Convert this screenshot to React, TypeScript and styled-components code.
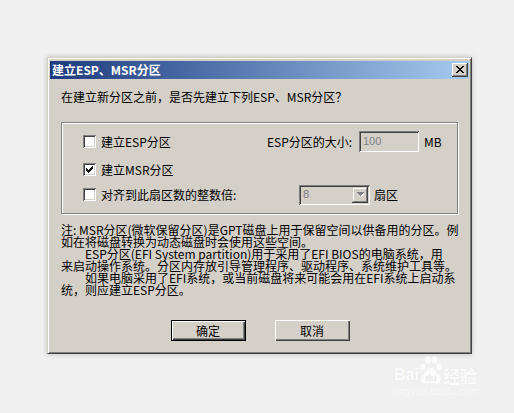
import React from "react";
import styled, { createGlobalStyle } from "styled-components";

const GlobalStyle = createGlobalStyle`
  html, body {
    margin: 0;
    padding: 0;
    background: #f0f0f0;
  }
  body {
    width: 514px;
    height: 413px;
    overflow: hidden;
    font-family: "Noto Sans CJK SC", "Liberation Sans", sans-serif;
  }
`;

const Page = styled.div`
  position: relative;
  width: 514px;
  height: 413px;
  box-sizing: border-box;
  padding: 57px 0 0 47px;
`;

const Window = styled.div`
  width: 425px;
  height: 297px;
  box-sizing: border-box;
  background: #d4d0c8;
  border: 1px solid;
  border-color: #d4d0c8 #404040 #404040 #d4d0c8;
  box-shadow: inset 1px 1px 0 #fff, inset -1px -1px 0 #808080,
    0 0 5px rgba(0, 0, 0, 0.22);
  padding: 3px 2px 2px 2px;
  display: flex;
  flex-direction: column;
`;

const TitleBar = styled.div`
  height: 18px;
  flex-shrink: 0;
  display: flex;
  align-items: center;
  justify-content: space-between;
  padding: 0 1px 0 2px;
  background: linear-gradient(to right, #1c3a7e, #a6caf0);
`;

const TitleText = styled.span`
  color: #fff;
  font-size: 12px;
  font-weight: bold;
  line-height: 18px;
  white-space: nowrap;
`;

const CloseButton = styled.div`
  width: 16px;
  height: 14px;
  box-sizing: border-box;
  background: #d4d0c8;
  box-shadow: inset -1px -1px 0 #404040, inset 1px 1px 0 #fff,
    inset -2px -2px 0 #808080;
  display: flex;
  align-items: center;
  justify-content: center;
  padding: 0 1px 1px 0;
`;

const Body = styled.div`
  flex: 1;
  padding: 12px 10px 0 11px;
  display: flex;
  flex-direction: column;
  font-size: 12px;
  color: #000;
`;

const Prompt = styled.div`
  line-height: 12px;
  white-space: nowrap;
`;

const GroupBox = styled.div`
  margin-top: 19px;
  width: 397px;
  height: 92px;
  box-sizing: border-box;
  border: 1px solid #808080;
  box-shadow: inset 1px 1px 0 #fff, 1px 1px 0 #fff;
  padding: 8px 0 0 21px;
`;

const Row = styled.div<{ $top?: number }>`
  height: 21px;
  margin-top: ${(p) => p.$top ?? 0}px;
  display: flex;
  align-items: center;
`;

const CheckItem = styled.label<{ $width: number }>`
  width: ${(p) => p.$width}px;
  display: flex;
  align-items: center;
  gap: 5px;
  line-height: 12px;
  white-space: nowrap;
`;

const CheckBox = styled.span`
  width: 13px;
  height: 13px;
  box-sizing: border-box;
  background: #fff;
  box-shadow: inset 1px 1px 0 #808080, inset -1px -1px 0 #fff,
    inset 2px 2px 0 #404040, inset -2px -2px 0 #d4d0c8;
  display: flex;
  align-items: center;
  justify-content: center;
`;

const FieldLabel = styled.span`
  width: 92px;
  line-height: 12px;
  white-space: nowrap;
`;

const Sunken = styled.div<{ $width: number; $height: number }>`
  width: ${(p) => p.$width}px;
  height: ${(p) => p.$height}px;
  box-sizing: border-box;
  background: #d4d0c8;
  box-shadow: inset 1px 1px 0 #808080, inset -1px -1px 0 #fff,
    inset 2px 2px 0 #404040, inset -2px -2px 0 #d4d0c8;
  padding: 2px;
  display: flex;
  align-items: center;
  font-family: "Liberation Sans", sans-serif;
  font-size: 11px;
  color: #808080;
`;

const FieldText = styled.span`
  flex: 1;
  padding-left: 2px;
  line-height: 13px;
`;

const DropButton = styled.div`
  width: 16px;
  height: 16px;
  box-sizing: border-box;
  background: #d4d0c8;
  box-shadow: inset -1px -1px 0 #404040, inset 1px 1px 0 #d4d0c8,
    inset -2px -2px 0 #808080, inset 2px 2px 0 #fff;
  display: flex;
  align-items: center;
  justify-content: center;
`;

const Unit = styled.span<{ $gap: number }>`
  margin-left: ${(p) => p.$gap}px;
  line-height: 12px;
  white-space: nowrap;
`;

const Note = styled.div`
  margin-top: 10px;
  line-height: 12px;
`;

const NoteLine = styled.div<{ $indent?: boolean }>`
  white-space: nowrap;
  padding-left: ${(p) => (p.$indent ? 24 : 0)}px;
`;

const Buttons = styled.div`
  margin-top: 24px;
  display: flex;
  justify-content: center;
  gap: 29px;
`;

const PushButton = styled.button<{ $default?: boolean }>`
  width: 75px;
  height: 21px;
  box-sizing: border-box;
  margin: 0;
  padding: 0;
  background: #d4d0c8;
  font-family: "Noto Sans CJK SC", sans-serif;
  font-size: 12px;
  line-height: 12px;
  color: #000;
  border: ${(p) => (p.$default ? "1px solid #000" : "none")};
  box-shadow: inset 1px 1px 0 #fff, inset -1px -1px 0 #404040,
    inset -2px -2px 0 #808080;
`;

const Watermark = styled.div`
  position: absolute;
  left: 394px;
  top: 356px;
  display: flex;
  flex-direction: column;
  color: #fbfbfb;
  text-shadow: 0 0 1px rgba(0, 0, 0, 0.06);
  font-family: "Liberation Sans", sans-serif;
`;

const MarkTop = styled.div`
  display: flex;
  align-items: flex-end;
  height: 28px;
`;

const MarkBai = styled.span`
  font-size: 16px;
  font-weight: bold;
  line-height: 16px;
  padding-bottom: 1px;
`;

const MarkJy = styled.span`
  font-family: "Noto Sans CJK SC", sans-serif;
  font-size: 17px;
  font-weight: bold;
  line-height: 17px;
`;

const MarkUrl = styled.span`
  margin-top: 3px;
  font-size: 10px;
  line-height: 10px;
  letter-spacing: 0.2px;
`;

const CheckMark = () => (
  <svg width="7" height="7" viewBox="0 0 7 7" shapeRendering="crispEdges">
    <path
      d="M0 2h1v1h1v1h1V3h1V2h1V1h1V0h1v3H6v1H5v1H4v1H3v1H2V6H1V5H0z"
      fill="#000"
    />
  </svg>
);

const CloseX = () => (
  <svg width="8" height="7" viewBox="0 0 8 7" shapeRendering="crispEdges">
    <path
      d="M0 0h2v1h1v1h2V1h1V0h2v1H7v1H6v1H5v1h1v1h1v1h1v1H6V6H5V5H3v1H2v1H0V6h1V5h1V4h1V3H2V2H1V1H0z"
      fill="#000"
    />
  </svg>
);

const DownArrow = () => (
  <svg width="7" height="5" viewBox="0 0 7 5" shapeRendering="crispEdges">
    <path d="M1 1h7v1H7v1H6v1H5v1H4V4H3V3H2V2H1z" fill="#fff" />
    <path d="M0 0h7v1H6v1H5v1H4v1H3V3H2V2H1V1H0z" fill="#808080" />
  </svg>
);

const Paw = () => (
  <svg width="24" height="28" viewBox="0 0 24 28">
    <ellipse cx="4" cy="11" rx="2.6" ry="3.2" fill="#fbfbfb" />
    <ellipse cx="9" cy="4" rx="2.8" ry="3.4" fill="#fbfbfb" />
    <ellipse cx="15.5" cy="4" rx="2.8" ry="3.4" fill="#fbfbfb" />
    <ellipse cx="20.5" cy="11" rx="2.6" ry="3.2" fill="#fbfbfb" />
    <path
      d="M12 12c3 0 4 3 6 5s4 3 4 6-2 5-5 4.5c-2-.3-3-1-5-1s-3 .7-5 1c-3 .5-5-1.5-5-4.5s2-4 4-6 3-5 6-5z"
      fill="#fbfbfb"
    />
    <text
      x="12"
      y="24.5"
      textAnchor="middle"
      fontFamily="Liberation Sans, sans-serif"
      fontWeight="bold"
      fontSize="9"
      fill="#ececec"
    >
      du
    </text>
  </svg>
);

const App: React.FC = () => {
  return (
    <>
      <GlobalStyle />
      <Page>
        <Window>
          <TitleBar>
            <TitleText>建立ESP、MSR分区</TitleText>
            <CloseButton>
              <CloseX />
            </CloseButton>
          </TitleBar>
          <Body>
            <Prompt>在建立新分区之前，是否先建立下列ESP、MSR分区？</Prompt>
            <GroupBox>
              <Row>
                <CheckItem $width={184}>
                  <CheckBox />
                  建立ESP分区
                </CheckItem>
                <FieldLabel>ESP分区的大小:</FieldLabel>
                <Sunken $width={60} $height={21}>
                  <FieldText>100</FieldText>
                </Sunken>
                <Unit $gap={5}>MB</Unit>
              </Row>
              <Row $top={7}>
                <CheckItem $width={184}>
                  <CheckBox>
                    <CheckMark />
                  </CheckBox>
                  建立MSR分区
                </CheckItem>
              </Row>
              <Row $top={4}>
                <CheckItem $width={216}>
                  <CheckBox />
                  对齐到此扇区数的整数倍:
                </CheckItem>
                <Sunken $width={71} $height={20}>
                  <FieldText>8</FieldText>
                  <DropButton>
                    <DownArrow />
                  </DropButton>
                </Sunken>
                <Unit $gap={4}>扇区</Unit>
              </Row>
            </GroupBox>
            <Note>
              <NoteLine>
                注: MSR分区(微软保留分区)是GPT磁盘上用于保留空间以供备用的分区。例
              </NoteLine>
              <NoteLine>如在将磁盘转换为动态磁盘时会使用这些空间。</NoteLine>
              <NoteLine $indent>
                ESP分区(EFI System partition)用于采用了EFI BIOS的电脑系统，用
              </NoteLine>
              <NoteLine>
                来启动操作系统。分区内存放引导管理程序、驱动程序、系统维护工具等。
              </NoteLine>
              <NoteLine $indent>
                如果电脑采用了EFI系统，或当前磁盘将来可能会用在EFI系统上启动系
              </NoteLine>
              <NoteLine>统，则应建立ESP分区。</NoteLine>
            </Note>
            <Buttons>
              <PushButton $default>确定</PushButton>
              <PushButton>取消</PushButton>
            </Buttons>
          </Body>
        </Window>
        <Watermark>
          <MarkTop>
            <MarkBai>Bai</MarkBai>
            <Paw />
            <MarkJy>经验</MarkJy>
          </MarkTop>
          <MarkUrl>jingyan.baidu.com</MarkUrl>
        </Watermark>
      </Page>
    </>
  );
};

export default App;
